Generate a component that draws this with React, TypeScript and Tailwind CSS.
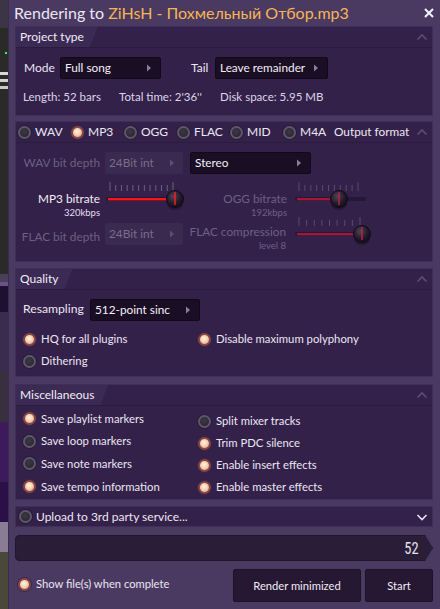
import React from "react";

type RadioProps = { on?: boolean };

function Radio({ on = false }: RadioProps) {
  return (
    <span
      className={
        on
          ? "inline-block w-[13px] h-[13px] shrink-0 rounded-full border-[2px] border-[#8a4646] bg-[radial-gradient(circle_at_45%_40%,#fff4e6_0%,#f2c9a6_55%,#c58a72_100%)] shadow-[0_0_0_1px_#3a2848]"
          : "inline-block w-[13px] h-[13px] shrink-0 rounded-full border-[2px] border-[#5e566a] bg-[radial-gradient(circle_at_45%_40%,#3e3846_0%,#26222c_100%)] shadow-[0_0_0_1px_#2a1c38]"
      }
    />
  );
}

function Option({ on, label, h = "h-[22px]" }: { on?: boolean; label: string; h?: string }) {
  return (
    <div className={`flex items-center gap-[5px] ${h}`}>
      <Radio on={on} />
      <span className="text-[11.3px] whitespace-nowrap text-[#ece6f2]">{label}</span>
    </div>
  );
}

function Caret({ dim = false }: { dim?: boolean }) {
  return (
    <svg width="6" height="8" viewBox="0 0 6 8" className="shrink-0">
      <path d="M1 0.5 L5 4 L1 7.5 Z" fill={dim ? "#5e4f70" : "#8a7f96"} />
    </svg>
  );
}

function Select({
  value,
  width,
  disabled = false,
}: {
  value: string;
  width: string;
  disabled?: boolean;
}) {
  return (
    <div
      className={
        disabled
          ? `${width} h-[22px] flex items-center justify-between pl-[4px] pr-[8px] rounded-[2px] bg-[#3a2a4f] text-[11.8px] whitespace-nowrap text-[#7a6c8c]`
          : `${width} h-[22px] flex items-center justify-between pl-[4px] pr-[8px] rounded-[2px] bg-[#1a0e24] border border-[#120818] text-[11.8px] whitespace-nowrap text-[#f4eef8]`
      }
    >
      <span>{value}</span>
      <Caret dim={disabled} />
    </div>
  );
}

function Chevron({ up = true }: { up?: boolean }) {
  return (
    <svg width="12" height="8" viewBox="0 0 12 8">
      <path
        d={up ? "M1.5 6.5 L6 2 L10.5 6.5" : "M1.5 2 L6 6.5 L10.5 2"}
        fill="none"
        stroke={up ? "#5c4e70" : "#e8e2ee"}
        strokeWidth="1.6"
      />
    </svg>
  );
}

// header strip with the slanted tab on the left
function SectionHead({ title, children }: { title?: string; children?: React.ReactNode }) {
  return (
    <div className="flex items-stretch h-[21px] border-b border-[#2b1c3d]">
      {title ? (
        <div className="flex items-center pl-[4px] pr-[14px] bg-[#3b2a53] [clip-path:polygon(0_0,100%_0,calc(100%-8px)_100%,0_100%)]">
          <span className="text-[12px] text-[#f2ecf6]">{title}</span>
        </div>
      ) : (
        children
      )}
      <div className="flex-1" />
      <div className="flex items-center pr-[4px]">
        <Chevron />
      </div>
    </div>
  );
}

function Knob({ x, y, bright }: { x: number; y: number; bright: boolean }) {
  return (
    <g>
      <ellipse cx={x} cy={y + 5} rx="8" ry="6" fill="#1c1226" opacity="0.6" />
      <circle cx={x} cy={y} r="8.5" fill="url(#knobFill)" stroke="#120a18" strokeWidth="1" />
      <line x1={x} y1={y - 7} x2={x} y2={y + 6} stroke={bright ? "#ff2020" : "#c02040"} strokeWidth="1.4" />
    </g>
  );
}

function Slider({
  pos,
  ticks,
  bright,
  width = 84,
}: {
  pos: number;
  ticks: number;
  bright: boolean;
  width?: number;
}) {
  const startX = 4;
  const endX = width - 10;
  const knobX = startX + (endX - startX) * pos;
  const marks = Array.from({ length: ticks }, (_, i) => startX + 2 + ((endX - startX - 4) * i) / (ticks - 1));
  return (
    <svg width={width} height="36" viewBox={`0 0 ${width} 36`}>
      <defs>
        <radialGradient id="knobFill" cx="40%" cy="35%" r="70%">
          <stop offset="0%" stopColor="#4e4458" />
          <stop offset="60%" stopColor="#221a2a" />
          <stop offset="100%" stopColor="#120c18" />
        </radialGradient>
      </defs>
      {marks.map((mx, i) => (
        <line
          key={i}
          x1={mx}
          y1={i === 0 || i === ticks - 1 ? 1 : 4}
          x2={mx}
          y2="10"
          stroke={bright ? "#6e6080" : "#5a4a6c"}
          strokeWidth="1"
        />
      ))}
      <rect x={startX - 2} y="16" width={endX - startX + 8} height="4" rx="2" fill="#241836" />
      <rect x={startX} y="17" width={knobX - startX} height="2.4" fill={bright ? "#ff1414" : "#a0183a"} />
      <Knob x={knobX} y={18} bright={bright} />
    </svg>
  );
}

function SideStrip() {
  return (
    <div className="w-[8px] shrink-0 flex flex-col">
      <div className="h-[28px] bg-[#3b3545]" />
      <div className="h-[246px] bg-[#2a2b29] flex flex-col">
        <div className="h-[24px]" />
        <div className="ml-[5px] w-[2px] h-[2px] bg-[#2aff4a]" />
        <div className="h-[18px]" />
        <div className="h-[3px] bg-[#d8d8d8]" />
        <div className="h-[4px]" />
        <div className="h-[3px] bg-[#d0d0d0]" />
        <div className="h-[4px]" />
        <div className="h-[3px] bg-[#c8c8c8]" />
      </div>
      <div className="h-[8px] bg-[#48405a]" />
      <div className="h-[4px] bg-[#6e4f8a]" />
      <div className="h-[26px] bg-[#1e1030]" />
      <div className="h-[60px] bg-[#3a2c4e]" />
      <div className="h-[50px] bg-[#38303f]" />
      <div className="h-[60px] bg-[#3c1a5c]" />
      <div className="h-[40px] bg-[#2a1046]" />
      <div className="h-[30px] bg-[#8a7c94]" />
      <div className="flex-1 bg-[#4a4838]" />
    </div>
  );
}

export default function App() {
  const misc = {
    left: [
      { label: "Save playlist markers", on: true },
      { label: "Save loop markers", on: false },
      { label: "Save note markers", on: false },
      { label: "Save tempo information", on: true },
    ],
    right: [
      { label: "Split mixer tracks", on: false },
      { label: "Trim PDC silence", on: true },
      { label: "Enable insert effects", on: true },
      { label: "Enable master effects", on: true },
    ],
  };
  const formats = [
    { name: "WAV", on: false },
    { name: "MP3", on: true },
    { name: "OGG", on: false },
    { name: "FLAC", on: false },
    { name: "MID", on: false },
    { name: "M4A", on: false },
  ];

  return (
    <div className="flex w-[440px] h-[609px] overflow-hidden bg-[#4a3a62] font-['Lato','Noto_Sans',sans-serif] text-[#ece6f2] leading-none">
      <SideStrip />

      <div className="flex-1 flex flex-col pl-[6px] pr-[7px] border-l border-[#3a2c4e]">
        {/* title bar */}
        <div className="h-[26px] flex items-center justify-between">
          <span className="text-[16px] whitespace-nowrap -ml-[1px]">
            Rendering to <span className="text-[#f6b552]">ZiHsH - Похмельный Отбор.mp3</span>
          </span>
          <svg width="10" height="10" viewBox="0 0 10 10" className="mr-[-1px]">
            <path d="M1 1 L9 9 M9 1 L1 9" stroke="#f4f4ff" strokeWidth="2" />
          </svg>
        </div>

        {/* project type */}
        <section className="h-[90px] bg-[#33214a] border border-[#3f2e57]">
          <SectionHead title="Project type" />
          <div className="flex items-center h-[38px] pt-[1px] pl-[8px]">
            <span className="text-[12px] w-[36px]">Mode</span>
            <Select value="Full song" width="w-[101px]" />
            <span className="text-[12px] ml-[30px] w-[24px]">Tail</span>
            <Select value="Leave remainder" width="w-[113px]" />
          </div>
          <div className="flex items-center h-[22px] pl-[7px] text-[11.5px] whitespace-nowrap text-[#ddd5e6]">
            <span className="w-[96px]">Length: 52 bars</span>
            <span className="w-[101px]">Total time: 2'36''</span>
            <span>Disk space: 5.95 MB</span>
          </div>
        </section>

        {/* output format */}
        <section className="h-[141px] mt-[5px] bg-[#33214a] border border-[#3f2e57]">
          <SectionHead>
            <div className="flex items-center pl-[2px] whitespace-nowrap">
              {formats.map((f) => (
                <div key={f.name} className="flex items-center gap-[4px] w-[53px]">
                  <Radio on={f.on} />
                  <span className="text-[12px]">{f.name}</span>
                </div>
              ))}
              <span className="text-[11.8px] ml-[-2px]">Output format</span>
            </div>
          </SectionHead>
          <div className="flex items-center h-[33px] pt-[6px]">
            <span className="w-[84px] text-right text-[11.8px] whitespace-nowrap text-[#6e6080]">WAV bit depth</span>
            <div className="ml-[5px]">
              <Select value="24Bit int" width="w-[78px]" disabled />
            </div>
            <div className="ml-[7px]">
              <Select value="Stereo" width="w-[121px]" />
            </div>
          </div>
          <div className="flex items-start h-[42px] pt-[3px]">
            <div className="w-[84px] flex flex-col items-end pt-[14px] whitespace-nowrap">
              <span className="text-[11.8px] text-[#f4eef8]">MP3 bitrate</span>
              <span className="text-[9.5px] mt-[3px] text-[#e6deee]">320kbps</span>
            </div>
            <div className="ml-[4px] mt-[2px]">
              <Slider pos={1} ticks={12} bright width={81} />
            </div>
            <div className="w-[102px] flex flex-col items-end pt-[14px] whitespace-nowrap">
              <span className="text-[11.8px] text-[#6e6080]">OGG bitrate</span>
              <span className="text-[9.5px] mt-[3px] text-[#6e6080]">192kbps</span>
            </div>
            <div className="ml-[6px] mt-[2px]">
              <Slider pos={0.667} ticks={11} bright={false} width={77} />
            </div>
          </div>
          <div className="flex items-start h-[40px] pt-[2px]">
            <div className="w-[84px] flex justify-end pt-[11px] whitespace-nowrap">
              <span className="text-[11.8px] text-[#6e6080]">FLAC bit depth</span>
            </div>
            <div className="ml-[5px] pt-[3px]">
              <Select value="24Bit int" width="w-[78px]" disabled />
            </div>
            <div className="w-[103px] flex flex-col items-end pt-[6px] whitespace-nowrap">
              <span className="text-[11.8px] text-[#6e6080]">FLAC compression</span>
              <span className="text-[9.5px] mt-[3px] text-[#6e6080]">level 8</span>
            </div>
            <div className="ml-[7px] -mt-[4px]">
              <Slider pos={1} ticks={9} bright={false} width={79} />
            </div>
          </div>
        </section>

        {/* quality */}
        <section className="h-[109px] mt-[6px] bg-[#33214a] border border-[#3f2e57]">
          <SectionHead title="Quality" />
          <div className="flex items-center h-[38px] pt-[1px] pl-[7px]">
            <span className="text-[12.2px] w-[67px]">Resampling</span>
            <Select value="512-point sinc" width="w-[110px]" />
          </div>
          <div className="grid grid-cols-[175px_1fr] pl-[7px]">
            <Option on label="HQ for all plugins" />
            <Option on label="Disable maximum polyphony" />
            <Option label="Dithering" />
          </div>
        </section>

        {/* miscellaneous */}
        <section className="h-[116px] mt-[7px] bg-[#33214a] border border-[#3f2e57]">
          <SectionHead title="Miscellaneous" />
          <div className="flex pl-[7px] pt-[1px]">
            <div className="w-[175px] flex flex-col">
              {misc.left.map((m) => (
                <Option key={m.label} on={m.on} label={m.label} h="h-[22.7px]" />
              ))}
            </div>
            <div className="flex flex-col pt-[3px]">
              {misc.right.map((m) => (
                <Option key={m.label} on={m.on} label={m.label} h="h-[22px]" />
              ))}
            </div>
          </div>
        </section>

        {/* upload */}
        <div className="h-[21px] mt-[6px] flex items-center justify-between pl-[3px] pr-[4px] bg-[#33214a] border border-[#3f2e57]">
          <div className="flex items-center gap-[4px]">
            <Radio />
            <span className="text-[12px] whitespace-nowrap">Upload to 3rd party service...</span>
          </div>
          <Chevron up={false} />
        </div>

        {/* progress */}
        <div className="h-[26px] mt-[8px] flex items-center justify-end pr-[12px] rounded-l-[4px] bg-[#2a1d38] border border-[#22162e] [clip-path:polygon(0_0,calc(100%-8px)_0,100%_50%,calc(100%-8px)_100%,0_100%)]">
          <span className="font-['Roboto_Condensed','Liberation_Sans_Narrow','DejaVu_Sans_Condensed',sans-serif] text-[17px] text-[#e6e0ec] scale-x-[0.85]">
            52
          </span>
        </div>

        {/* bottom actions */}
        <div className="flex items-center mt-[8px] h-[33px]">
          <div className="flex items-center gap-[5px] pl-[3px] -mt-[3px]">
            <Radio on />
            <span className="text-[11.2px] whitespace-nowrap">Show file(s) when complete</span>
          </div>
          <div className="flex-1" />
          <button className="h-[33px] w-[128px] bg-[#261732] border border-[#1e1228] rounded-[2px] text-[11.2px] text-[#f2ecf6]">
            Render minimized
          </button>
          <button className="h-[33px] w-[68px] ml-[4px] bg-[#261732] border border-[#1e1228] rounded-[2px] text-[11.2px] text-[#f2ecf6]">
            Start
          </button>
        </div>
      </div>
    </div>
  );
}
